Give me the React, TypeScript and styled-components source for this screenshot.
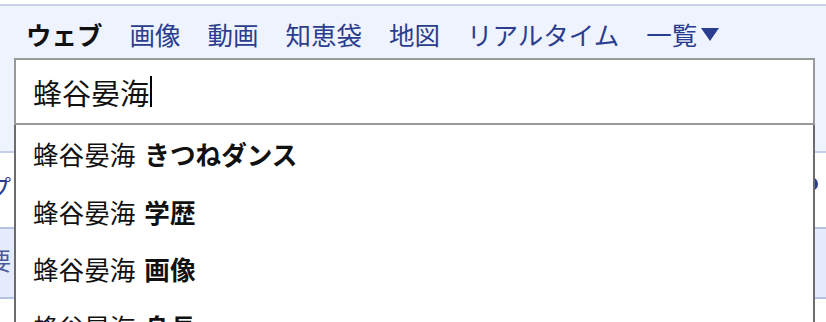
import React from "react";
import styled, { createGlobalStyle } from "styled-components";

const GlobalStyle = createGlobalStyle`
  html, body {
    margin: 0;
    padding: 0;
    background: #fff;
    overflow: hidden;
  }
  body {
    font-family: "Noto Sans CJK JP", "Noto Sans", sans-serif;
    color: #000;
  }
`;

const tabs = ["画像", "動画", "知恵袋", "地図", "リアルタイム"];

const suggestions = ["きつねダンス", "学歴", "画像", "身長"];

const Page = styled.div`
  padding-top: 4px;
  width: 826px;
  height: 322px;
  overflow: hidden;
`;

const Header = styled.div`
  height: 147px;
  border-top: 2px solid #c8d0e8;
  background: #eff3fd;
  box-sizing: border-box;
`;

const TabBar = styled.nav`
  display: flex;
  align-items: center;
  gap: 27px;
  height: 30px;
  padding: 13px 0 0 26px;
  font-size: 25.5px;
  line-height: 30px;
`;

const Tab = styled.a<{ $active?: boolean }>`
  color: ${(p) => (p.$active ? "#111" : "#2a3d8f")};
  font-weight: ${(p) => (p.$active ? 700 : 400)};
  text-decoration: none;
  white-space: nowrap;
  display: flex;
  align-items: center;
`;

const Arrow = styled.span`
  display: inline-block;
  margin-left: 4px;
  width: 0;
  height: 0;
  border-left: 9px solid transparent;
  border-right: 9px solid transparent;
  border-top: 13px solid #2a3d8f;
`;

const SearchWrap = styled.div`
  position: relative;
  margin: 9px 0 0 14px;
  width: 801px;
  z-index: 2;
`;

const SearchBox = styled.div`
  height: 67px;
  border: 2px solid #999;
  box-sizing: border-box;
  background: #fff;
  display: flex;
  align-items: center;
  padding-left: 17px;
  font-size: 29px;
  color: #111;
`;

const Caret = styled.span`
  display: inline-block;
  width: 2px;
  height: 31px;
  margin-left: 1px;
  background: #000;
`;

const Dropdown = styled.ul`
  position: absolute;
  top: 100%;
  left: 0;
  right: 0;
  margin: 0;
  padding: 0;
  list-style: none;
  background: #fff;
  border-left: 2px solid #6c6c6c;
  border-right: 2px solid #6c6c6c;
  height: 240px;
`;

const Item = styled.li`
  height: 57.5px;
  display: flex;
  align-items: center;
  padding-left: 17px;
  font-size: 25.6px;
  color: #111;
  white-space: nowrap;

  b {
    font-weight: 700;
    margin-left: 0.35em;
  }
`;

const Row = styled.div<{ $shaded?: boolean }>`
  height: ${(p) => (p.$shaded ? "68px" : "74px")};
  border-top: 2px solid ${(p) => (p.$shaded ? "#b4c2e4" : "#c6cfe9")};
  background: ${(p) => (p.$shaded ? "#e5ebfa" : "#fff")};
  display: flex;
  align-items: center;
  justify-content: space-between;
  overflow: hidden;
`;

const PeekText = styled.span<{ $color: string }>`
  margin-left: -13px;
  margin-top: -8px;
  font-size: 24px;
  color: ${(p) => p.$color};
`;

const PeekDot = styled.span`
  width: 14px;
  height: 14px;
  border-radius: 50%;
  background: #2a3d8f;
  margin-right: 8px;
  margin-top: -12px;
`;

const Bottom = styled.div`
  border-top: 2px solid #b4c2e4;
  height: 40px;
  background: #fff;
`;

export default function App() {
  return (
    <>
      <GlobalStyle />
      <Page>
        <Header>
          <TabBar>
            <Tab $active>ウェブ</Tab>
            {tabs.map((t) => (
              <Tab key={t}>{t}</Tab>
            ))}
            <Tab>
              一覧
              <Arrow />
            </Tab>
          </TabBar>
          <SearchWrap>
            <SearchBox>
              蜂谷晏海
              <Caret />
            </SearchBox>
            <Dropdown>
              {suggestions.map((s) => (
                <Item key={s}>
                  蜂谷晏海<b>{s}</b>
                </Item>
              ))}
            </Dropdown>
          </SearchWrap>
        </Header>
        <Row>
          <PeekText $color="#2a3d8f">プ</PeekText>
          <PeekDot />
        </Row>
        <Row $shaded>
          <PeekText $color="#4a5a9a">要</PeekText>
        </Row>
        <Bottom />
      </Page>
    </>
  );
}
